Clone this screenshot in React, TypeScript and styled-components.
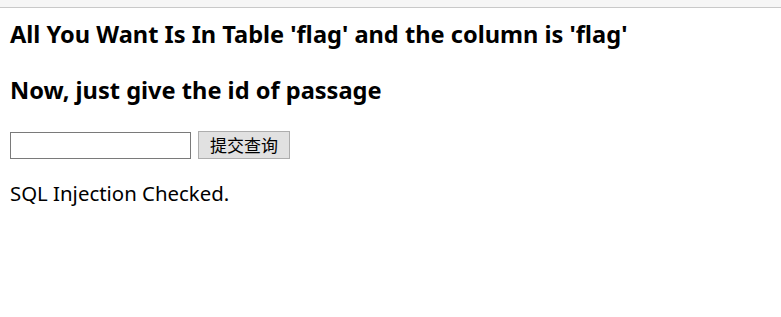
import React from "react";
import styled, { createGlobalStyle } from "styled-components";

const Global = createGlobalStyle`
  html, body { margin: 0; background: #fff; }
  body { font-family: "Noto Sans", "Noto Sans CJK SC", sans-serif; color: #000; }
`;

const TopBar = styled.div`
  height: 7px;
  background: #f6f6f6;
  border-bottom: 1px solid #c9c9c9;
`;

const Main = styled.main`
  padding: 10.5px 10px 0;
`;

const Heading = styled.h3<{ $gap?: number }>`
  margin: ${(p) => p.$gap ?? 0}px 0 0;
  font-size: 23.6px;
  font-weight: bold;
  line-height: 30px;
  white-space: nowrap;
`;

const Form = styled.form`
  display: flex;
  align-items: flex-end;
  gap: 7px;
  margin-top: 26.5px;
`;

const TextInput = styled.input`
  box-sizing: border-box;
  width: 181px;
  height: 27px;
  margin: 0;
  padding: 1px 3px;
  border: 1px solid #7a7a7a;
  border-radius: 0;
  background: #fff;
  font: 20px "Noto Sans", sans-serif;
  outline: none;
`;

const SubmitButton = styled.button`
  box-sizing: border-box;
  width: 92px;
  height: 28px;
  margin: 0;
  padding: 0;
  border: 1px solid #adadad;
  border-radius: 0;
  background: #e1e1e1;
  color: #000;
  font-family: "Noto Sans CJK SC", sans-serif;
  font-size: 17px;
  line-height: 26px;
`;

const Message = styled.p`
  margin: 21.4px 0 0;
  font-size: 20.4px;
  line-height: 27px;
`;

export default function App() {
  return (
    <>
      <Global />
      <TopBar />
      <Main>
        <Heading>All You Want Is In Table 'flag' and the column is 'flag'</Heading>
        <Heading $gap={26}>Now, just give the id of passage</Heading>
        <Form onSubmit={(e) => e.preventDefault()}>
          <TextInput type="text" name="id" />
          <SubmitButton type="submit">提交查询</SubmitButton>
        </Form>
        <Message>SQL Injection Checked.</Message>
      </Main>
    </>
  );
}
